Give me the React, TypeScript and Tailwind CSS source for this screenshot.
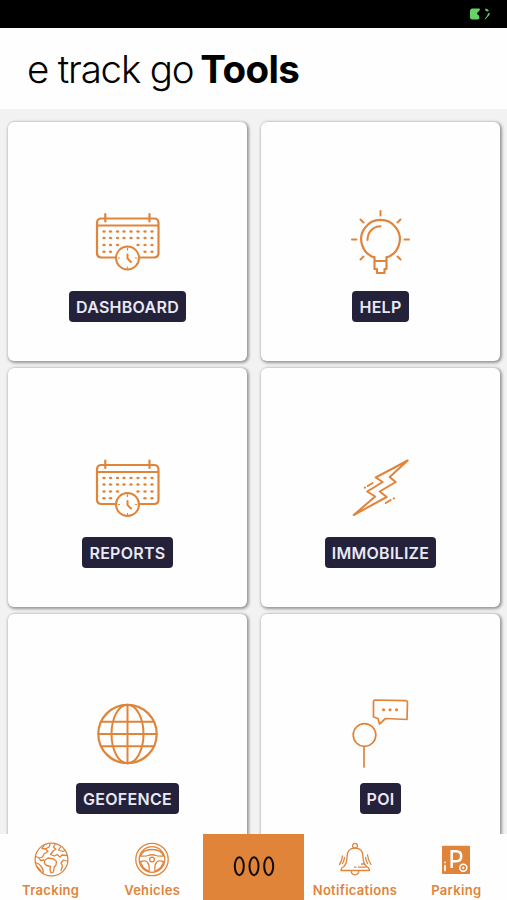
import type { ReactNode } from "react";

const ORANGE = "#e0843a";

function Drawing({ dx = 0, dy = 0, children }: { dx?: number; dy?: number; children: ReactNode }) {
  return (
    <svg width="100" height="90" viewBox={`${-dx} ${-dy} 100 90`} fill="none" stroke={ORANGE} strokeWidth="2" strokeLinecap="round" strokeLinejoin="round" className="shrink-0 overflow-visible">
      {children}
    </svg>
  );
}

const dotRows: { y: number; xs: number[] }[] = [
  { y: 36.5, xs: [24, 30.5, 37.5, 44, 51, 58, 65, 72] },
  { y: 43, xs: [24, 30.5, 37.5, 44, 51, 58, 65, 72] },
  { y: 50, xs: [24, 30.5, 37.5, 58, 65, 72] },
  { y: 56.7, xs: [24, 30.5, 65, 72] },
];

function CalendarIcon({ dy = 0 }: { dy?: number }) {
  return (
    <Drawing dx={2} dy={dy}>
      <path d="M35.5 62.5H21.5Q17 62.5 17 58V28Q17 23.5 21.5 23.5H74Q78.500 23.500 78.500 28V58Q78.500 62.500 74 62.500H60M17 30.500H78.500M25.300 19V26.500M69.500 19V26.500" strokeWidth="2.200" />
      <circle cx="47.500" cy="63" r="11.500" />
      <path d="M47.500 59.500V63.500L51 67" />
      <path d="M47.500 53V55M47.500 72V73M38.500 63H39.500M55.500 63H56.500" strokeWidth="1.200" />
      {dotRows.map((row) =>
        row.xs.map((x) => <ellipse key={`${x}-${row.y}`} cx={x} cy={row.y} rx="1.7" ry="1.3" fill={ORANGE} stroke="none" />)
      )}
    </Drawing>
  );
}

function BulbIcon() {
  return (
    <Drawing dx={4}>
      <path d="M39.500 62.500A19.300 19.300 0 1 1 51.500 62.500M39.500 62V74H42V78H49.500V74H51.500V62M39.500 66H51.500" strokeWidth="2.200" />
      <path d="M32.500 45C32.500 37 38 31.500 45.500 31.300" />
      <path d="M45.500 16V20.500M25.500 24.500L28.500 27.500M65.500 24.500L62.500 27.500M17 44.500H21.500M69.500 44.500H74M25.500 64.500L28.500 61.500M65.500 64.500L62.500 61.500" />
    </Drawing>
  );
}

function BoltIcon() {
  return (
    <Drawing dx={4.2} dy={4}>
      <path d="M72.500 15.500L40.500 32.500L47.500 37L32 46.500L40 51.500L18.500 70L51.500 52L44.500 46.500L60.500 37L54.500 32Z" />
      <path d="M37.500 38L32.500 41M29.800 42.500L29.500 42.700M50.500 58L55.500 55M58.500 53.500L58.800 53.300" />
    </Drawing>
  );
}

function GlobeIcon() {
  return (
    <Drawing dx={2} dy={3}>
      <circle cx="47.500" cy="44" r="29.200" strokeWidth="2.200" />
      <ellipse cx="47.500" cy="44" rx="16" ry="29.200" />
      <path d="M47.500 15V73M18.500 44H76.500M22 31.800H73M22 56.200H73" />
    </Drawing>
  );
}

function PoiIcon() {
  return (
    <Drawing dx={4} dy={3}>
      <circle cx="29.500" cy="45" r="11.300" strokeWidth="1.700" />
      <path d="M29 56.500V77" strokeWidth="1.700" />
      <path d="M40 10L71 10.700Q72.500 11 72.500 12.500L72 29.500L50.500 28.500L44.500 34L43 28.500L38.500 27V12Q38.500 10 40 10Z" strokeWidth="1.700" />
      <path d="M48.500 19.700H48.600M55 19.700H55.100M61.500 19.700H61.600" strokeWidth="3" />
    </Drawing>
  );
}

function NavDrawing({ children }: { children: ReactNode }) {
  return (
    <svg width="36" height="36" viewBox="0 0 36 36" fill="none" stroke={ORANGE} strokeWidth="1.300" strokeLinecap="round" strokeLinejoin="round" className="shrink-0">
      {children}
    </svg>
  );
}

function EarthIcon() {
  return (
    <NavDrawing>
      <circle cx="18.500" cy="17.500" r="16.400" />
      <path d="M11 3.500L9 6.500L12.500 7L16 5L17 2.500M12.500 7L15 9.500L11 12L9.500 15L6 16L3 14.500M6 16L7.500 18.500L10.500 18" />
      <path d="M2.500 20.500Q7 22 8.500 25Q11 28 10 31.500M3.500 24L8 29" />
      <path d="M22 2.500L20.500 5L23 7.500L20.500 8.500L17.500 12.500L21.500 14L24 12.500L27 15L29 13L34 13.500M27.500 5L25.500 8L30 9.500L32 8.500" />
      <path d="M11.500 18.500L15 16L20.500 17L23.500 19.500L23 23L21 25.500L20.500 30L18 31L17 27.500L17.500 24.500L13.500 23.500L11.500 21.500Z" />
      <path d="M34 19L30.500 18L28 21L29.500 24L28 28.500" />
    </NavDrawing>
  );
}

function WheelIcon() {
  return (
    <NavDrawing>
      <circle cx="18" cy="17.500" r="16.200" />
      <circle cx="18" cy="17.500" r="12.800" />
      <circle cx="18" cy="17.500" r="2.400" />
      <path d="M6.500 14Q8.500 7.500 18 7.500Q27.500 7.500 29.500 14Q24 14.500 22 13.500Q18 12 14 13.500Q12 14.500 6.500 14ZM6.500 19.500Q12 18 13.500 20.500Q16 24 15 29Q8 27 6.500 19.500ZM29.500 19.500Q24 18 22.500 20.500Q20 24 21 29Q28 27 29.500 19.500Z" />
    </NavDrawing>
  );
}

function BellIcon() {
  return (
    <NavDrawing>
      <circle cx="18" cy="3.700" r="2.400" />
      <path d="M7 24.500Q10 21 10 15Q10 6.200 18 6.200Q26 6.200 26 15Q26 21 29.500 24.500Q32.500 25.500 32.500 28.500H4Q4 25.500 7 24.500ZM14 28.500Q14.500 32.800 18 32.800Q21.500 32.800 22 28.500" />
      <path d="M5.500 14Q5 19 2.500 22.500M7.500 15.500Q7 19 5.500 21.500M30.500 13Q31 18 34 22.500M28.500 15.500Q29 19 30.500 21.500M24.500 22H27.500M21.500 25.200H29M17.500 25.200H19" />
    </NavDrawing>
  );
}

function ParkingIcon() {
  return (
    <NavDrawing>
      <rect x="4" y="3.700" width="28" height="28.300" rx="1" fill={ORANGE} stroke="none" />
      <path d="M13.700 26V9.300H18.200Q23.200 9.300 23.200 14.300Q23.200 19.300 18.200 19.300H13.700" stroke="#fff" strokeWidth="2.500" strokeLinecap="butt" strokeLinejoin="miter" />
      <circle cx="25.300" cy="25.800" r="3.500" stroke="#fff" strokeWidth="1.500" />
      <path d="M25.300 25.300V26.200" stroke="#fff" strokeWidth="1.800" />
      <path d="M7 23.500V28.500M7 20.300V20.500" stroke="#fff" strokeWidth="1.700" />
    </NavDrawing>
  );
}

function MoreIcon() {
  return (
    <svg width="44" height="24" viewBox="0 0 44 24" fill="none" stroke="#120b06" strokeWidth="2">
      <ellipse cx="7.300" cy="12.200" rx="4.500" ry="9" />
      <ellipse cx="22" cy="12.200" rx="4.500" ry="9" />
      <ellipse cx="36.700" cy="12.200" rx="4.500" ry="9" />
    </svg>
  );
}

function BatteryIcon() {
  return (
    <svg width="20" height="12" viewBox="0 0 20 12" fill="#65d166">
      <path d="M2.500 0.500H9.500L10 2L7.500 4.500L7 6L9 7.500L9.500 10.500L8 11.500H2.500Q0 11.500 0 9V3Q0 0.500 2.500 0.500Z" />
      <path d="M15.500 0.500Q18 0.500 19 3L17 3.500L15 2ZM19.500 4.500V7L17 9.500L15.500 11.500L15 10.500L17 8L18 5.500Z" />
    </svg>
  );
}

const tools: { label: string; icon: ReactNode }[] = [
  { label: "DASHBOARD", icon: <CalendarIcon /> },
  { label: "HELP", icon: <BulbIcon /> },
  { label: "REPORTS", icon: <CalendarIcon dy={0.5} /> },
  { label: "IMMOBILIZE", icon: <BoltIcon /> },
  { label: "GEOFENCE", icon: <GlobeIcon /> },
  { label: "POI", icon: <PoiIcon /> },
];

function ToolCard({ label, icon }: { label: string; icon: ReactNode }) {
  return (
    <div className="flex h-[239px] flex-col items-center gap-1.5 rounded-md bg-[#fefefe] pt-[73px] shadow-[1px_1px_3px_1px_rgba(0,0,0,0.38)]">
      {icon}
      <span className="flex h-[31px] items-center rounded bg-[#24213a] px-[7px] pt-px text-[16px] font-semibold tracking-[0.28px] whitespace-nowrap text-[#e9e9f4]">{label}</span>
    </div>
  );
}

function NavItem({ label, icon }: { label: string; icon: ReactNode }) {
  return (
    <div className="flex flex-1 basis-0 flex-col items-center pt-2">
      {icon}
      <span className="mt-[2px] text-[13px] leading-5 font-semibold tracking-[0.3px] whitespace-nowrap text-[#e0843a]">{label}</span>
    </div>
  );
}

export default function App() {
  return (
    <div className="flex h-[900px] w-[507px] flex-col overflow-hidden bg-[#f2f2f2] font-['Inter','Liberation_Sans',sans-serif]">
      <div className="flex h-7 shrink-0 items-center justify-end bg-black pr-[17px]">
        <BatteryIcon />
      </div>
      <header className="flex h-[81px] shrink-0 items-center bg-[#fefefe] pt-px pl-[27px]">
        <h1 className="flex items-baseline gap-[7px] text-[38.5px] leading-none whitespace-nowrap text-black">
          <span className="font-light tracking-[-1.2px]">e track go</span>
          <span className="font-bold tracking-[-0.6px]">Tools</span>
        </h1>
      </header>
      <main className="grid min-h-0 flex-1 auto-rows-[239px] grid-cols-[239px_239px] gap-x-[14px] gap-y-[7px] overflow-hidden pt-[13px] pl-2">
        {tools.map((tool) => (
          <ToolCard key={tool.label} {...tool} />
        ))}
      </main>
      <nav className="flex h-[66px] shrink-0 bg-[#fefefe]">
        <NavItem label="Tracking" icon={<EarthIcon />} />
        <NavItem label="Vehicles" icon={<WheelIcon />} />
        <div className="flex flex-1 basis-0 justify-center bg-[#e0843a] pt-5">
          <MoreIcon />
        </div>
        <NavItem label="Notifications" icon={<BellIcon />} />
        <NavItem label="Parking" icon={<ParkingIcon />} />
      </nav>
    </div>
  );
}
